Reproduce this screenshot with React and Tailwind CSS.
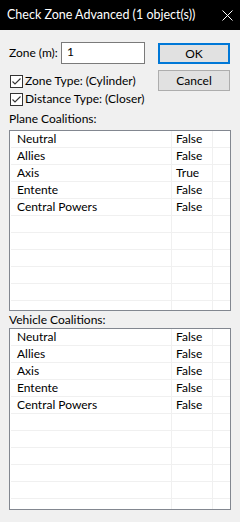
import React from 'react'

const plane = [
  ['Neutral', 'False'],
  ['Allies', 'False'],
  ['Axis', 'True'],
  ['Entente', 'False'],
  ['Central Powers', 'False'],
]

const vehicle = [
  ['Neutral', 'False'],
  ['Allies', 'False'],
  ['Axis', 'False'],
  ['Entente', 'False'],
  ['Central Powers', 'False'],
]

function Check({ label }) {
  return (
    <label className="flex items-center h-[18px] gap-[2px] whitespace-nowrap">
      <span className="w-[13px] h-[13px] border border-[#333333] bg-white flex items-center justify-center shrink-0">
        <svg width="11" height="11" viewBox="0 0 11 11" aria-hidden="true">
          <path d="M1.5 5.5 L4 8 L9.5 2.5" fill="none" stroke="#333333" strokeWidth="1.1" />
        </svg>
      </span>
      <span>{label}</span>
    </label>
  )
}

function Grid({ rows, height }) {
  // leere Zeilen auffüllen, damit das Gitter bis unten reicht
  const all = [...rows, ...Array.from({ length: 11 - rows.length }, () => ['', ''])]
  return (
    <div className={`mx-[9px] border border-[#828790] bg-white overflow-hidden pl-[1px] ${height}`}>
      {all.map(([name, val], i) => (
        <div key={i} className="flex h-[17px] border-b border-[#f0f0f0] w-[221px]">
          <div className="w-[161px] border-r border-[#f0f0f0] pl-[6px] leading-[16px] whitespace-nowrap">{name}</div>
          <div className="w-[41px] border-r border-[#f0f0f0] pl-[4px] leading-[16px]">{val}</div>
          <div className="flex-1"></div>
        </div>
      ))}
    </div>
  )
}

export default function App() {
  return (
    <div className="w-[240px] h-[522px] bg-[#f0f0f0] text-[12px] text-black font-['Lato','Noto_Sans',sans-serif] overflow-hidden">
      {/* Titelleiste */}
      <div className="h-[30px] bg-black text-white flex items-center pl-[7px] pr-[7px]">
        <span className="text-[12.5px] flex-1 whitespace-nowrap">Check Zone Advanced (1 object(s))</span>
        <svg width="11" height="11" viewBox="0 0 11 11" aria-hidden="true">
          <path d="M0.5 0.5 L10.5 10.5 M10.5 0.5 L0.5 10.5" stroke="#ffffff" strokeWidth="1" />
        </svg>
      </div>

      {/* Kopfbereich */}
      <div className="flex pt-[12px] pl-[9px] pr-[10px]">
        <div className="flex-1">
          <div className="flex items-center h-[22px]">
            <span className="w-[52px] whitespace-nowrap">Zone (m):</span>
            <div className="w-[84px] h-[22px] border border-[#7a7a7a] bg-white pl-[5px] leading-[18px]">1</div>
          </div>
          <div className="mt-[8px] pl-[1px]">
            <Check label="Zone Type: (Cylinder)" />
            <Check label="Distance Type: (Closer)" />
          </div>
        </div>
        <div className="flex flex-col gap-[6px] pt-[1px]">
          <button className="w-[72px] h-[21px] border-2 border-[#0078d7] bg-[#e1e1e1] leading-[16px]">OK</button>
          <button className="w-[72px] h-[21px] border border-[#adadad] bg-[#e1e1e1] leading-[18px]">Cancel</button>
        </div>
      </div>

      <div className="pl-[9px] mt-[2px] h-[17px] leading-[17px]">Plane Coalitions:</div>
      <div className="mt-[3px]">
        <Grid rows={plane} height="h-[181px]" />
      </div>

      <div className="pl-[9px] mt-[1px] h-[16px] leading-[16px]">Vehicle Coalitions:</div>
      <Grid rows={vehicle} height="h-[182px]" />
    </div>
  )
}
